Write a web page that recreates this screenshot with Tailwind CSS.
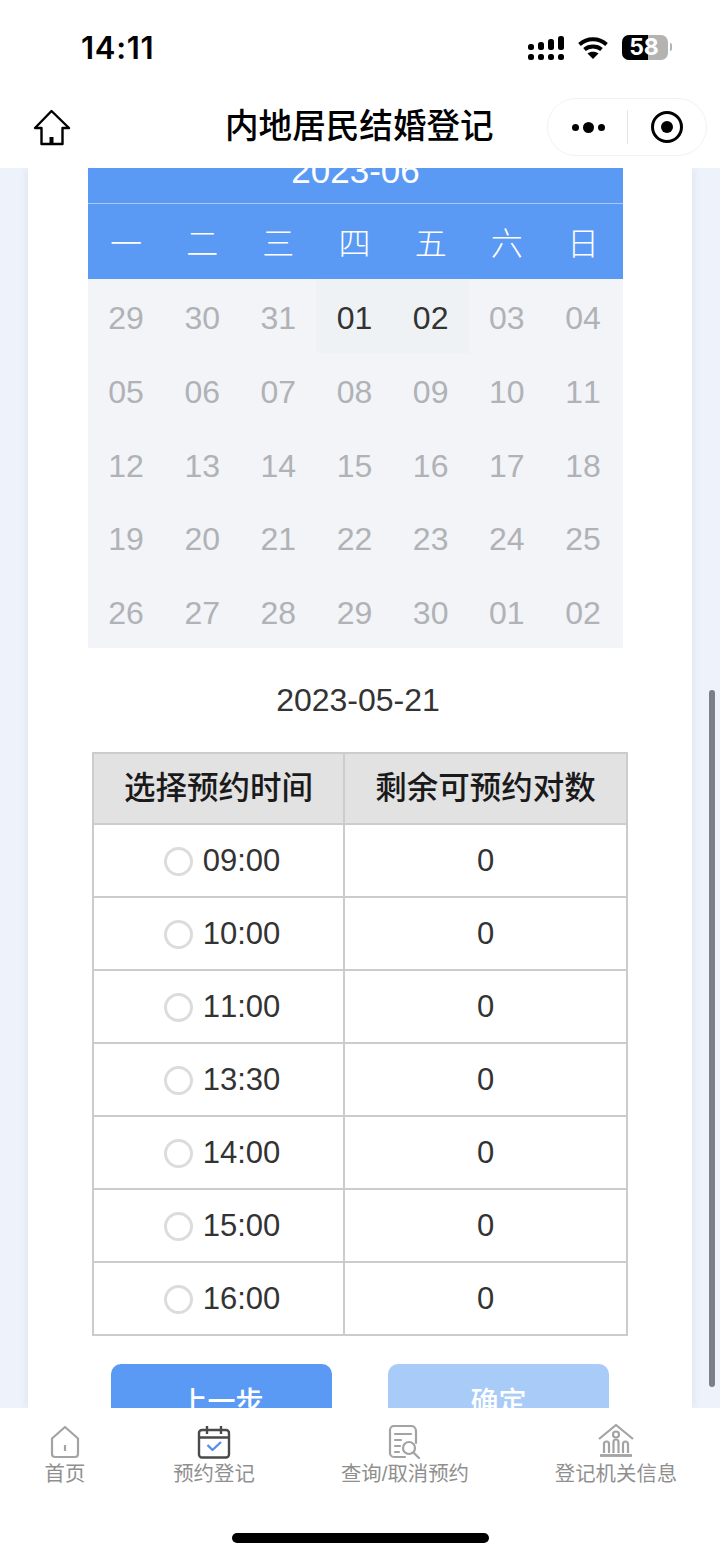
<!DOCTYPE html>
<html lang="zh">
<head>
<meta charset="utf-8">
<script src="https://cdn.jsdelivr.net/npm/@tailwindcss/browser@4"></script>
</head>
<body class="m-0">
<div class="relative w-[720px] h-[1558px] overflow-hidden flex flex-col bg-white text-[#333] [font-kerning:none] font-['Liberation_Sans','Noto_Sans_CJK_SC',sans-serif]">
  <!-- top -->
  <header class="relative z-10 h-[168px] shrink-0 bg-white flex flex-col">
    <div class="h-[97px] flex items-start justify-between pt-[29px] pl-[81px] pr-[52px]">
      <span class="text-[31px] leading-[38px] font-semibold text-black font-['Inter','Liberation_Sans',sans-serif] tracking-[0.7px]">14:11</span>
      <div class="flex items-center gap-[14px] pt-[6px]">
        <svg width="36" height="24" viewBox="0 0 36 24" fill="#000"><rect x="0" y="8" width="6" height="6" rx="2.500"/><rect x="0" y="18" width="6" height="6" rx="2.500"/><rect x="10" y="6" width="6" height="8" rx="2.500"/><rect x="10" y="18" width="6" height="6" rx="2.500"/><rect x="20" y="3" width="6" height="11" rx="2.500"/><rect x="20" y="18" width="6" height="6" rx="2.500"/><rect x="30" y="0" width="6" height="14" rx="2.500"/><rect x="30" y="18" width="6" height="6" rx="2.500"/></svg>
        <svg width="30" height="22" viewBox="0 0 30 22" fill="none" stroke="#000" stroke-width="3.800"><path d="M1.500 7.500C9 0.500 21 0.500 28.500 7.500"/><path d="M6.500 12.500C11 8.500 19 8.500 23.500 12.500"/><path d="M15 22l-5.500-5.500C12.500 14 17.500 14 20.500 16.500z" fill="#000" stroke="none"/></svg>
        <div class="relative w-[46px] h-[25px]">
          <div class="absolute inset-0 rounded-[7px] overflow-hidden flex bg-[#b3b3b3]"><div class="w-[26px] bg-black"></div></div>
          <span class="absolute inset-0 flex items-center justify-center pr-[2px] text-[23px] font-bold text-white font-['Inter','Liberation_Sans',sans-serif]">58</span>
          <span class="absolute left-[48px] top-[8px] w-[2px] h-[8px] rounded-r-full bg-[#b3b3b3]"></span>
        </div>
      </div>
    </div>
    <div class="relative flex-1 flex items-start">
      <svg class="absolute left-[33px] top-[12px]" width="38" height="37" viewBox="0 0 38 37" fill="none" stroke="#000" stroke-width="2.400" stroke-linejoin="round"><path d="M18.500 2L2 19h6.500V35h21V19H36z"/><path d="M18.500 28v7" stroke-width="4"/></svg>
      <h1 class="absolute left-[225px] top-[8px] m-0 text-[33.600px] leading-[44px] font-medium text-black whitespace-nowrap">内地居民结婚登记</h1>
      <div class="absolute left-[547px] top-[1px] w-[160px] h-[58px] rounded-[29px] border border-[#f2f2f2] bg-white flex items-center">
        <div class="w-[79px] flex items-center justify-center gap-[4px] pl-[2px]">
          <span class="w-[7px] h-[7px] rounded-full bg-black"></span><span class="w-[11px] h-[11px] rounded-full bg-black"></span><span class="w-[7px] h-[7px] rounded-full bg-black"></span>
        </div>
        <div class="w-px h-[34px] bg-[#e6e6e6]"></div>
        <div class="flex-1 flex justify-center">
          <div class="w-[32px] h-[32px] rounded-full border-[3.500px] border-black flex items-center justify-center"><span class="w-[12px] h-[12px] rounded-full bg-black"></span></div>
        </div>
      </div>
    </div>
  </header>

  <!-- content -->
  <main class="flex-1 min-h-0 overflow-hidden bg-[#eef2fa] px-[28px]">
    <div class="h-full bg-white pl-[60px] pr-[64px] overflow-hidden shadow-[0_0_10px_rgba(0,0,0,0.08)]">
      <div class="-mt-[14px] w-[535px]">
        <div class="h-[50px] bg-[#5a9af5] border-b border-[#a9c9f8] text-white text-center text-[35px] leading-[33px]">2023-06</div>
        <div class="h-[75px] pt-[4px] pr-[2px] bg-[#5a9af5] grid grid-cols-7 items-center text-center text-white text-[32px] font-light">
          <span>一</span><span>二</span><span>三</span><span>四</span><span>五</span><span>六</span><span>日</span>
        </div>
        <div class="bg-[#f2f4f8] pr-[2px] grid grid-cols-7 auto-rows-[73.800px] text-center text-[32px] leading-[79px] text-[#b0b2b6]">
          <span>29</span><span>30</span><span>31</span><span class="bg-[#eff2f5] text-[#333]">01</span><span class="bg-[#eff2f5] text-[#333]">02</span><span>03</span><span>04</span>
          <span>05</span><span>06</span><span>07</span><span>08</span><span>09</span><span>10</span><span>11</span>
          <span>12</span><span>13</span><span>14</span><span>15</span><span>16</span><span>17</span><span>18</span>
          <span>19</span><span>20</span><span>21</span><span>22</span><span>23</span><span>24</span><span>25</span>
          <span>26</span><span>27</span><span>28</span><span>29</span><span>30</span><span>01</span><span>02</span>
        </div>
      </div>
      <div class="text-center text-[32px] leading-[36px] mt-[34px] text-[#333]">2023-05-21</div>
      <table class="mt-[34px] ml-[4px] w-[536px] border-collapse table-fixed text-[31px]">
        <thead>
          <tr class="h-[71px] bg-[#e2e2e2] text-[31.500px] text-[#1a1a1a]">
            <th class="w-[251px] border-2 border-[#cccccc] font-medium">选择预约时间</th>
            <th class="border-2 border-[#cccccc] font-medium">剩余可预约对数</th>
          </tr>
        </thead>
        <tbody>
          <tr class="h-[73px]"><td class="border-2 border-[#cccccc]"><div class="flex items-center justify-center gap-[10px] pt-[2px] pl-[7px]"><span class="w-[29px] h-[29px] rounded-full border-[3px] border-[#dcdcdc]"></span>09:00</div></td><td class="border-2 border-[#cccccc] text-center pt-[2px]">0</td></tr>
          <tr class="h-[73px]"><td class="border-2 border-[#cccccc]"><div class="flex items-center justify-center gap-[10px] pt-[2px] pl-[7px]"><span class="w-[29px] h-[29px] rounded-full border-[3px] border-[#dcdcdc]"></span>10:00</div></td><td class="border-2 border-[#cccccc] text-center pt-[2px]">0</td></tr>
          <tr class="h-[73px]"><td class="border-2 border-[#cccccc]"><div class="flex items-center justify-center gap-[10px] pt-[2px] pl-[7px]"><span class="w-[29px] h-[29px] rounded-full border-[3px] border-[#dcdcdc]"></span>11:00</div></td><td class="border-2 border-[#cccccc] text-center pt-[2px]">0</td></tr>
          <tr class="h-[73px]"><td class="border-2 border-[#cccccc]"><div class="flex items-center justify-center gap-[10px] pt-[2px] pl-[7px]"><span class="w-[29px] h-[29px] rounded-full border-[3px] border-[#dcdcdc]"></span>13:30</div></td><td class="border-2 border-[#cccccc] text-center pt-[2px]">0</td></tr>
          <tr class="h-[73px]"><td class="border-2 border-[#cccccc]"><div class="flex items-center justify-center gap-[10px] pt-[2px] pl-[7px]"><span class="w-[29px] h-[29px] rounded-full border-[3px] border-[#dcdcdc]"></span>14:00</div></td><td class="border-2 border-[#cccccc] text-center pt-[2px]">0</td></tr>
          <tr class="h-[73px]"><td class="border-2 border-[#cccccc]"><div class="flex items-center justify-center gap-[10px] pt-[2px] pl-[7px]"><span class="w-[29px] h-[29px] rounded-full border-[3px] border-[#dcdcdc]"></span>15:00</div></td><td class="border-2 border-[#cccccc] text-center pt-[2px]">0</td></tr>
          <tr class="h-[73px]"><td class="border-2 border-[#cccccc]"><div class="flex items-center justify-center gap-[10px] pt-[2px] pl-[7px]"><span class="w-[29px] h-[29px] rounded-full border-[3px] border-[#dcdcdc]"></span>16:00</div></td><td class="border-2 border-[#cccccc] text-center pt-[2px]">0</td></tr>
        </tbody>
      </table>
      <div class="mt-[28px] ml-[23px] flex gap-[56px] text-white text-[28px] font-medium text-center">
        <div class="w-[221px] h-[80px] rounded-[10px] bg-[#5a9af5] leading-[78px]">上一步</div>
        <div class="w-[221px] h-[80px] rounded-[10px] bg-[#a8cbf8] leading-[78px]">确定</div>
      </div>
    </div>
  </main>

  <!-- scrollbar -->
  <div class="absolute left-[709px] top-[690px] w-[6px] h-[697px] rounded-full bg-[#7c7f86]"></div>

  <!-- tabs -->
  <nav class="relative h-[150px] shrink-0 bg-white text-[20.400px] leading-[26px] text-[#8f8f8f]">
    <div class="absolute left-[45px] top-[17px] w-[40px] flex flex-col items-center">
      <svg width="30" height="34" viewBox="0 0 30 34" fill="none" stroke="#a3a3a3" stroke-width="2.200" stroke-linejoin="round"><path d="M15 2L2 13.500V29a3 3 0 003 3h20a3 3 0 003-3V13.500z"/><path d="M15 20v6"/></svg>
      <span class="whitespace-nowrap mt-[2px]">首页</span>
    </div>
    <div class="absolute left-[172px] top-[17px] w-[84px] flex flex-col items-center">
      <svg width="34" height="34" viewBox="0 0 34 34" fill="none" stroke="#4a4a4a" stroke-width="2.400" stroke-linejoin="round"><rect x="2" y="5" width="30" height="27.500" rx="3"/><path d="M2 12.500h30M10 1v8M24 1v8"/><path d="M10.500 20l5 5 8.500-8" stroke="#5a8cf0"/></svg>
      <span class="whitespace-nowrap mt-[2px]">预约登记</span>
    </div>
    <div class="absolute left-[340px] top-[17px] w-[130px] flex flex-col items-center">
      <svg width="34" height="34" viewBox="0 0 34 34" fill="none" stroke="#a3a3a3" stroke-width="2.200" stroke-linecap="round"><path d="M17 32H6a4 4 0 01-4-4V5a4 4 0 014-4h17a5 5 0 015 5v12"/><path d="M7 9h16M7 15h6M7 21h5M7 27h4"/><circle cx="21" cy="23" r="6"/><path d="M26 28l5 5"/></svg>
      <span class="whitespace-nowrap mt-[2px]">查询/取消预约</span>
    </div>
    <div class="absolute left-[555px] top-[15px] w-[122px] flex flex-col items-center">
      <svg width="38" height="36" viewBox="0 0 38 36" fill="none" stroke="#a3a3a3" stroke-width="2.200" stroke-linejoin="round"><path d="M2 16L19 2l17 14"/><circle cx="19" cy="11.500" r="3"/><path d="M3 32.500h32" stroke-width="2.800"/><path d="M7 30v-9a2.500 2.500 0 015 0v9M16.500 30v-11a2.500 2.500 0 015 0v11M26 30v-9a2.500 2.500 0 015 0v9"/></svg>
      <span class="whitespace-nowrap mt-[2px]">登记机关信息</span>
    </div>
    <div class="absolute left-[232px] top-[125px] w-[257px] h-[10px] rounded-full bg-black"></div>
  </nav>
</div>
</body>
</html>
